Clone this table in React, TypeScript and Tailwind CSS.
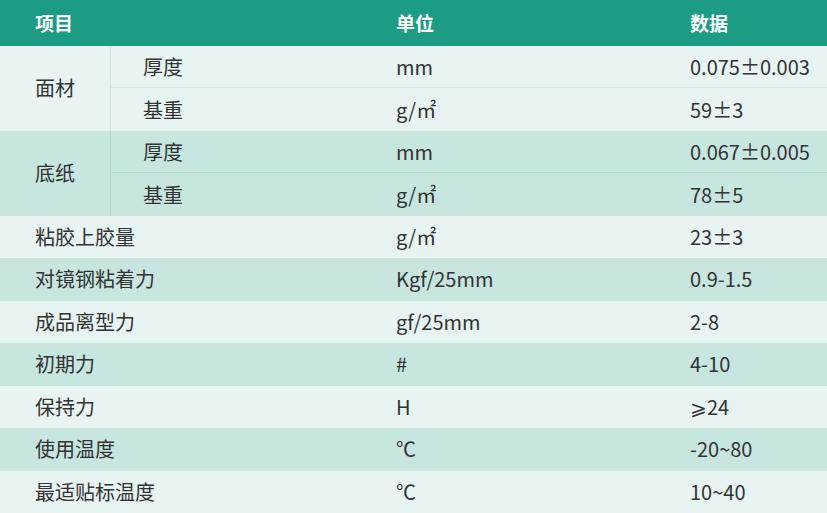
import React from "react";

const LIGHT = "bg-[#e7f4f1]";
const DARK = "bg-[#c6e6df]";

export default function App() {
  const font = { fontFamily: '"Noto Sans CJK SC", "Noto Sans", sans-serif' };
  const singles: [string, string, string, string][] = [
    ["粘胶上胶量", "g/㎡", "23±3", LIGHT],
    ["对镜钢粘着力", "Kgf/25mm", "0.9-1.5", DARK],
    ["成品离型力", "gf/25mm", "2-8", LIGHT],
    ["初期力", "#", "4-10", DARK],
    ["保持力", "H", "⩾24", LIGHT],
    ["使用温度", "℃", "-20~80", DARK],
    ["最适贴标温度", "℃", "10~40", LIGHT],
  ];
  const rowClasses = ["row-start-6", "row-start-7", "row-start-8", "row-start-9", "row-start-10", "row-start-11", "row-start-12"];
  return (
    <div
      className="w-[827px] h-[513px] grid grid-cols-[111px_269px_294px_1fr] grid-rows-[46px_repeat(11,1fr)] text-[20px] text-[#333333] overflow-hidden"
      style={font}
    >
      {/* header */}
      <div className="col-span-2 bg-[#1c9c82] text-white font-bold text-[19px] flex items-center pl-[35px]">项目</div>
      <div className="bg-[#1c9c82] text-white font-bold text-[19px] flex items-center pl-[16px]">单位</div>
      <div className="bg-[#1c9c82] text-white font-bold text-[19px] flex items-center pl-[16px]">数据</div>

      {/* 面材 group */}
      <div className={`row-start-2 row-span-2 col-start-1 ${LIGHT} border-r border-[#cfe6e0] flex items-center pl-[35px]`}>面材</div>
      <div className={`row-start-2 col-start-2 ${LIGHT} border-b border-[#cfe6e0] flex items-center pl-[32px]`}>厚度</div>
      <div className={`row-start-2 col-start-3 ${LIGHT} border-b border-[#cfe6e0] flex items-center pl-[16px]`}>mm</div>
      <div className={`row-start-2 col-start-4 ${LIGHT} border-b border-[#cfe6e0] flex items-center pl-[16px]`}>0.075±0.003</div>
      <div className={`row-start-3 col-start-2 ${LIGHT} flex items-center pl-[32px]`}>基重</div>
      <div className={`row-start-3 col-start-3 ${LIGHT} flex items-center pl-[16px]`}>g/㎡</div>
      <div className={`row-start-3 col-start-4 ${LIGHT} flex items-center pl-[16px]`}>59±3</div>

      {/* 底纸 group */}
      <div className={`row-start-4 row-span-2 col-start-1 ${DARK} border-r border-[#b5dbd2] flex items-center pl-[35px]`}>底纸</div>
      <div className={`row-start-4 col-start-2 ${DARK} border-b border-[#b5dbd2] flex items-center pl-[32px]`}>厚度</div>
      <div className={`row-start-4 col-start-3 ${DARK} border-b border-[#b5dbd2] flex items-center pl-[16px]`}>mm</div>
      <div className={`row-start-4 col-start-4 ${DARK} border-b border-[#b5dbd2] flex items-center pl-[16px]`}>0.067±0.005</div>
      <div className={`row-start-5 col-start-2 ${DARK} flex items-center pl-[32px]`}>基重</div>
      <div className={`row-start-5 col-start-3 ${DARK} flex items-center pl-[16px]`}>g/㎡</div>
      <div className={`row-start-5 col-start-4 ${DARK} flex items-center pl-[16px]`}>78±5</div>

      {singles.map(([a, b, c, bg], i) => (
        <React.Fragment key={a}>
          <div className={`${rowClasses[i]} col-start-1 col-span-2 ${bg} flex items-center pl-[35px]`}>{a}</div>
          <div className={`${rowClasses[i]} col-start-3 ${bg} flex items-center pl-[16px]`}>{b}</div>
          <div className={`${rowClasses[i]} col-start-4 ${bg} flex items-center pl-[16px]`}>{c}</div>
        </React.Fragment>
      ))}
    </div>
  );
}
